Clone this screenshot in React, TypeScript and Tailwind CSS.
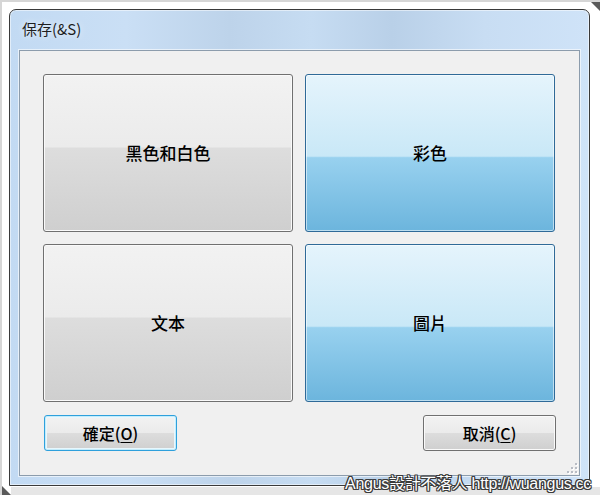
import React from "react";

const cjk = "font-['Noto_Sans_CJK_TC','Noto_Sans_CJK_SC',sans-serif]";

function BigButton({ label, blue }: { label: string; blue?: boolean }) {
  return (
    <button
      className={
        blue
          ? "flex items-center justify-center rounded-[3px] border border-[#2f6a98] bg-[linear-gradient(to_bottom,#e5f4fc_0%,#c9e8f7_52%,#98d1ef_53%,#6cb5dd_100%)] shadow-[inset_0_0_0_1px_rgba(255,255,255,0.55)] text-[17px] font-medium text-black"
          : "flex items-center justify-center rounded-[3px] border border-[#707070] bg-[linear-gradient(to_bottom,#f2f2f2_0%,#ebebeb_46%,#dddddd_47%,#cfcfcf_100%)] shadow-[inset_0_0_0_1px_#fafafa] text-[17px] font-medium text-black"
      }
    >
      {label}
    </button>
  );
}

function SizeGrip() {
  return (
    <svg width="11" height="11" viewBox="0 0 11 11">
      {[
        [8, 0],
        [4, 4],
        [8, 4],
        [0, 8],
        [4, 8],
        [8, 8],
      ].map(([x, y], i) => (
        <g key={i}>
          <rect x={x + 1} y={y + 1} width="2" height="2" fill="#ffffff" />
          <rect x={x} y={y} width="2" height="2" fill="#b8bcc4" />
        </g>
      ))}
    </svg>
  );
}

export default function App() {
  return (
    <div className={`relative w-[600px] h-[495px] overflow-hidden bg-white border-t-2 border-l-2 border-[#d6d6d6] ${cjk}`}>
      <div className="absolute left-0 bottom-0 w-[9px] h-[9px] bg-[#5a5a5a] [clip-path:polygon(0_0,100%_100%,0_100%)]" />
      <div className="absolute right-0 top-0 w-[9px] h-[9px] bg-[#5a5a5a] [clip-path:polygon(0_0,100%_0,100%_100%)]" />
      <div className="absolute left-[9px] right-0 bottom-0 h-[8px] bg-[#e6e6e6]" />

      <div className="ml-[7px] mt-[7px] flex h-[477px] w-[581px] flex-col rounded-t-[7px] border border-[#3a3a3a] bg-[linear-gradient(90deg,#c2daf3_0%,#cadff5_20%,#bdd3ea_38%,#c6dcf2_52%,#b9d0e8_66%,#c8ddf3_82%,#cfe3f8_100%)] shadow-[inset_0_0_0_1px_rgba(255,255,255,0.5)]">
        <div className="flex h-[40px] items-center pl-[12px] pb-[2px]">
          <span className="text-[15px] text-[#1e1e1e] [text-shadow:0_0_6px_rgba(255,255,255,0.9)]">
            保存(&amp;S)
          </span>
        </div>
        <div className="mx-[9px] flex flex-1 flex-col border border-[#8c9cac] bg-[#f0f0f0] shadow-[0_0_0_1px_rgba(255,255,255,0.6)]">
          <div className="grid grid-cols-[250px_250px] grid-rows-[158px_158px] gap-x-[12px] gap-y-[12px] pl-[23px] pt-[23px]">
            <BigButton label="黑色和白色" />
            <BigButton label="彩色" blue />
            <BigButton label="文本" />
            <BigButton label="圖片" blue />
          </div>
          <div className="flex w-[536px] justify-between pl-[24px] pt-[13px]">
            <button className="flex h-[36px] w-[133px] items-center justify-center rounded-[3px] border border-[#2ea0dc] bg-[linear-gradient(to_bottom,#f2f2f2_0%,#ebebeb_49%,#dddddd_50%,#cfcfcf_100%)] shadow-[inset_0_0_0_1px_#c4ecfb,inset_0_0_0_2px_#e8f7fd] text-[16px] font-medium text-black">
              確定(<span className="underline underline-offset-2">O</span>)
            </button>
            <button className="flex h-[36px] w-[133px] items-center justify-center rounded-[3px] border border-[#707070] bg-[linear-gradient(to_bottom,#f2f2f2_0%,#ebebeb_49%,#dddddd_50%,#cfcfcf_100%)] shadow-[inset_0_0_0_1px_#fafafa] text-[16px] font-medium text-black">
              取消(<span className="underline underline-offset-2">C</span>)
            </button>
          </div>
          <div className="mt-auto flex justify-end pb-[1px] pr-[1px]">
            <SizeGrip />
          </div>
        </div>
        <div className="h-[9px]" />
      </div>

      <div className="absolute right-[9px] bottom-[1px] font-['Liberation_Sans','Noto_Sans_CJK_TC',sans-serif] text-[16px] leading-[20px] tracking-[-0.3px] text-white [text-shadow:1px_0_0_#3a3a3a,-1px_0_0_#3a3a3a,0_1px_0_#3a3a3a,0_-1px_0_#3a3a3a,1px_1px_0_#3a3a3a,-1px_-1px_0_#3a3a3a,1px_-1px_0_#3a3a3a,-1px_1px_0_#3a3a3a]">
        Angus設計不落人 http://wuangus.cc
      </div>
    </div>
  );
}
